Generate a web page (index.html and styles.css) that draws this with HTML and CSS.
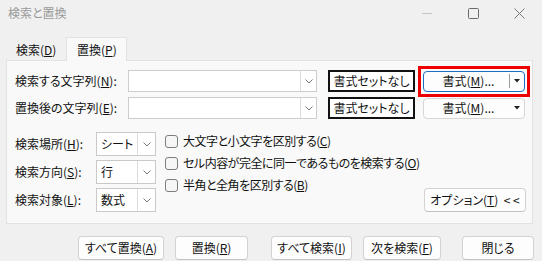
FILE: index.html
```html
<!DOCTYPE html>
<html lang="ja">
<head>
<meta charset="utf-8">
<title>検索と置換</title>
<link rel="stylesheet" href="styles.css">
</head>
<body>
<div class="titlebar">
  <span class="title">検索と置換</span>
  <div class="controls">
    <span class="ctl"><svg width="10" height="10" viewBox="0 0 10 10"><line x1="0" y1="5.5" x2="10" y2="5.5" stroke="#c4c4c4" stroke-width="1"/></svg></span>
    <span class="ctl"><svg width="11" height="11" viewBox="0 0 11 11"><rect x="0.5" y="0.5" width="10" height="10" rx="1" fill="none" stroke="#6a6a6a" stroke-width="1"/></svg></span>
    <span class="ctl"><svg width="11" height="11" viewBox="0 0 11 11"><path d="M0.5 0.5 L10.5 10.5 M10.5 0.5 L0.5 10.5" stroke="#7a7a7a" stroke-width="1" fill="none"/></svg></span>
  </div>
</div>

<div class="tabs">
  <div class="tab">検索(<u>D</u>)</div>
  <div class="tab active">置換(<u>P</u>)</div>
</div>

<div class="panel">
  <div class="row">
    <span class="lbl">検索する文字列(<u>N</u>):</span>
    <div class="combo"><span class="field"></span><span class="arrow"><svg width="8" height="5" viewBox="0 0 8 5"><polyline points="0.5,0.5 4,4 7.5,0.5" fill="none" stroke="#777" stroke-width="1"/></svg></span></div>
    <button class="fmtnone">書式セットなし</button>
    <div class="hl">
      <button class="fmt focus"><span class="fmt-text">書式(<u>M</u>)...</span><span class="sep"></span><svg class="tri" width="6" height="4" viewBox="0 0 6 4"><polygon points="0,0 6,0 3,3.5" fill="#222"/></svg></button>
    </div>
  </div>
  <div class="row row2">
    <span class="lbl">置換後の文字列(<u>E</u>):</span>
    <div class="combo"><span class="field"></span><span class="arrow"><svg width="8" height="5" viewBox="0 0 8 5"><polyline points="0.5,0.5 4,4 7.5,0.5" fill="none" stroke="#777" stroke-width="1"/></svg></span></div>
    <button class="fmtnone">書式セットなし</button>
    <button class="fmt plain"><span class="fmt-text">書式(<u>M</u>)...</span><span class="sep blank"></span><svg class="tri" width="6" height="4" viewBox="0 0 6 4"><polygon points="0,0 6,0 3,3.5" fill="#222"/></svg></button>
  </div>

  <div class="opts">
    <div class="selects">
      <div class="srow">
        <span class="slbl">検索場所(<u>H</u>):</span>
        <div class="select"><span class="sval">シート</span><span class="sarrow"><svg width="8" height="5" viewBox="0 0 8 5"><polyline points="0.5,0.5 4,4 7.5,0.5" fill="none" stroke="#777" stroke-width="1"/></svg></span></div>
      </div>
      <div class="srow">
        <span class="slbl">検索方向(<u>S</u>):</span>
        <div class="select"><span class="sval">行</span><span class="sarrow"><svg width="8" height="5" viewBox="0 0 8 5"><polyline points="0.5,0.5 4,4 7.5,0.5" fill="none" stroke="#777" stroke-width="1"/></svg></span></div>
      </div>
      <div class="srow">
        <span class="slbl">検索対象(<u>L</u>):</span>
        <div class="select"><span class="sval">数式</span><span class="sarrow"><svg width="8" height="5" viewBox="0 0 8 5"><polyline points="0.5,0.5 4,4 7.5,0.5" fill="none" stroke="#777" stroke-width="1"/></svg></span></div>
      </div>
    </div>
    <div class="checks">
      <label class="crow"><span class="box"></span>大文字と小文字を区別する(<u>C</u>)</label>
      <label class="crow"><span class="box"></span>セル内容が完全に同一であるものを検索する(<u>O</u>)</label>
      <label class="crow"><span class="box"></span>半角と全角を区別する(<u>B</u>)</label>
    </div>
    <button class="btn optbtn">オプション(<u>T</u>)&nbsp; &lt; &lt;</button>
  </div>
</div>

<div class="footer">
  <button class="btn b1">すべて置換(<u>A</u>)</button>
  <button class="btn b2">置換(<u>R</u>)</button>
  <button class="btn b3">すべて検索(<u>I</u>)</button>
  <button class="btn b4">次を検索(<u>F</u>)</button>
  <button class="btn b5">閉じる</button>
</div>
</body>
</html>
```

FILE: styles.css
```css
* { box-sizing: border-box; }

html, body {
  margin: 0;
  padding: 0;
}

body {
  width: 542px;
  height: 261px;
  overflow: hidden;
  background: #f0f0f0;
  font-family: "Noto Sans CJK JP", "Noto Sans", sans-serif;
  font-feature-settings: "palt";
  font-size: 12px;
  line-height: 16px;
  color: #111;
}

u { text-underline-offset: 1px; }

button {
  font: inherit;
  color: inherit;
  margin: 0;
  padding: 0;
  background: none;
  border: none;
}

/* title bar */
.titlebar {
  height: 26px;
  display: flex;
  align-items: center;
  padding-left: 8px;
}
.title {
  color: #9a9a9a;
  font-size: 12px;
}
.controls {
  margin-left: auto;
  display: flex;
  align-self: stretch;
}
.ctl {
  width: 46px;
  display: flex;
  align-items: center;
  justify-content: center;
}
.ctl svg { display: block; }

/* tabs */
.tabs {
  display: flex;
  margin: 11px 0 0 6px;
  height: 24px;
  position: relative;
  z-index: 1;
  margin-bottom: -1px;
}
.tab {
  height: 24px;
  width: 60px;
  padding-top: 5px;
  padding-left: 10px;
  white-space: nowrap;
}
.tab.active {
  width: 61px;
  padding-top: 4px;
  background: #f9f9f9;
  border: 1px solid #e2e2e2;
  border-bottom: none;
}

/* panel */
.panel {
  margin-left: 6px;
  width: 527px;
  height: 164px;
  background: #f9f9f9;
  border: 1px solid #e2e2e2;
  padding: 9px 6px 0 8px;
}

.row {
  display: flex;
  align-items: center;
  height: 22px;
}
.row2 { margin-top: 5px; }

.lbl {
  width: 113px;
  white-space: nowrap;
}

.combo {
  width: 189px;
  height: 22px;
  display: flex;
  background: #fff;
  border: 1px solid #cdcdcd;
}
.field { flex: 1; }
.arrow {
  width: 16px;
  border-left: 1px solid #dcdcdc;
  display: flex;
  align-items: center;
  justify-content: center;
}
.arrow svg, .sarrow svg { display: block; }

.fmtnone {
  margin-left: 11px;
  width: 87px;
  height: 22px;
  background: #fff;
  border: 2px solid #111;
  display: flex;
  align-items: center;
  justify-content: center;
  white-space: nowrap;
}

.hl {
  position: relative;
  margin-left: 8px;
}
.hl::after {
  content: "";
  position: absolute;
  left: -5px;
  right: -5px;
  top: -5px;
  bottom: -5px;
  border: 3px solid #ee0000;
  pointer-events: none;
}

.fmt {
  width: 102px;
  height: 21px;
  display: flex;
  align-items: center;
  background: #fdfdfd;
  border: 1px solid #d6d6d6;
  border-radius: 4px;
  padding: 0 3px 0 0;
}
.fmt.focus {
  border: 1px solid #1a6fc4;
  background: #fdfdfd;
}
.fmt.plain {
  margin-left: 8px;
}
.fmt-text {
  flex: 1;
  text-align: center;
  padding-left: 4px;
  white-space: nowrap;
}
.sep {
  width: 1px;
  height: 14px;
  background: #9a9a9a;
  margin-right: 4px;
}
.sep.blank { background: transparent; }
.tri { display: block; margin-right: 1px; }

/* options */
.opts {
  display: flex;
  margin-top: 13px;
  height: 80px;
}
.selects {
  display: flex;
  flex-direction: column;
  gap: 4px;
}
.srow {
  display: flex;
  align-items: center;
  height: 24px;
}
.slbl {
  width: 81px;
  white-space: nowrap;
}
.select {
  width: 60px;
  height: 24px;
  display: flex;
  background: #fff;
  border: 1px solid #c9c9c9;
}
.sval {
  flex: 1;
  padding-left: 4px;
  display: flex;
  align-items: center;
  white-space: nowrap;
}
.sarrow {
  width: 18px;
  border-left: 1px solid #dcdcdc;
  display: flex;
  align-items: center;
  justify-content: center;
}

.checks {
  margin-left: 9px;
  margin-top: -2px;
  display: flex;
  flex-direction: column;
}
.crow {
  height: 22px;
  display: flex;
  align-items: center;
  white-space: nowrap;
  letter-spacing: -0.5px;
}
.box {
  width: 13px;
  height: 13px;
  border: 1px solid #7d7d7d;
  border-radius: 3px;
  background: #f6f6f6;
  margin-right: 5px;
}

.btn {
  height: 24px;
  background: #fdfdfd;
  border: 1px solid #d3d3d3;
  border-bottom-color: #c2c2c2;
  border-radius: 4px;
  display: flex;
  align-items: center;
  justify-content: center;
  white-space: nowrap;
}
.optbtn {
  margin-left: auto;
  align-self: flex-end;
  width: 102px;
}

/* footer */
.footer {
  display: flex;
  margin-top: 12px;
  padding-left: 78px;
}
.b1 { width: 86px; }
.b2 { width: 73px; margin-left: 11px; }
.b3 { width: 81px; margin-left: 23px; }
.b4 { width: 78px; margin-left: 11px; }
.b5 { width: 72px; margin-left: 21px; }
```
